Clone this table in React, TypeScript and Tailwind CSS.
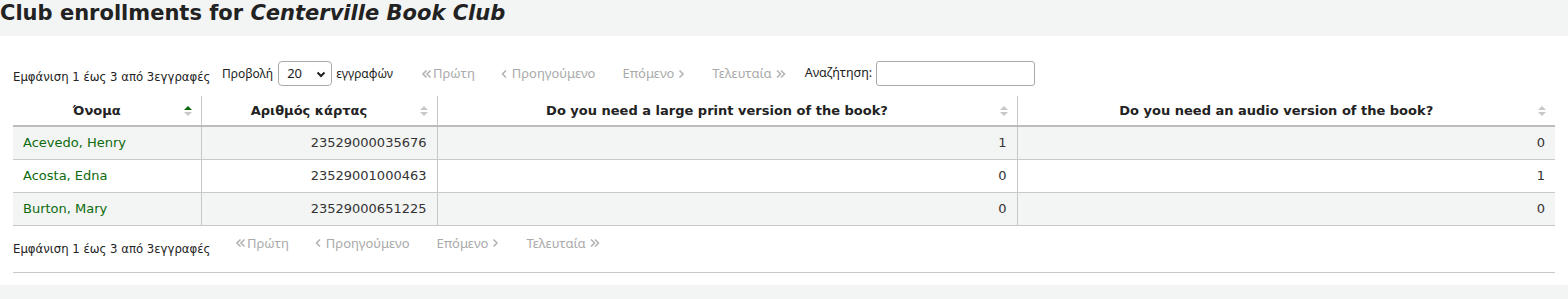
import React from "react";

const rows = [
  { name: "Acevedo, Henry", card: "23529000035676", large: "1", audio: "0" },
  { name: "Acosta, Edna", card: "23529001000463", large: "0", audio: "1" },
  { name: "Burton, Mary", card: "23529000651225", large: "0", audio: "0" },
];

const headers = [
  "Όνομα",
  "Αριθμός κάρτας",
  "Do you need a large print version of the book?",
  "Do you need an audio version of the book?",
];

function SortIcon({ active }: { active?: boolean }) {
  return (
    <svg width="8" height="12" viewBox="0 0 8 12" className="absolute right-[9px] top-[9px]">
      <path d="M0 5 L4 1 L8 5 Z" fill={active ? "#0a6b0a" : "#c8c8c8"} />
      <path d="M0 7 L4 11 L8 7 Z" fill="#c8c8c8" />
    </svg>
  );
}

function Chevron({ double, right }: { double?: boolean; right?: boolean }) {
  const d = double
    ? right
      ? "M1 1.5 L4.5 5 L1 8.5 M5 1.5 L8.5 5 L5 8.5"
      : "M4.5 1.5 L1 5 L4.5 8.5 M8.5 1.5 L5 5 L8.5 8.5"
    : right
      ? "M1.5 1.5 L5 5 L1.5 8.5"
      : "M5 1.5 L1.5 5 L5 8.5";
  return (
    <svg width={double ? 10 : 7} height="10" viewBox={double ? "0 0 10 10" : "0 0 7 10"} className="shrink-0">
      <path d={d} stroke="#b4b4b4" strokeWidth="1.6" fill="none" />
    </svg>
  );
}

function Pager() {
  return (
    <div className="flex items-center font-['Noto_Sans',sans-serif] text-[13px] text-[#aaaaaa]">
      <span className="flex items-center gap-[1px] px-[13px]">
        <Chevron double />
        Πρώτη
      </span>
      <span className="flex items-center gap-[4px] px-[13px]">
        <Chevron />
        Προηγούμενο
      </span>
      <span className="flex items-center gap-[4px] px-[14px]">
        Επόμενο
        <Chevron right />
      </span>
      <span className="flex items-center gap-[4px] px-[13px]">
        Τελευταία
        <Chevron double right />
      </span>
    </div>
  );
}

export default function App() {
  return (
    <div className="w-[1568px] h-[299px] bg-[#f3f4f4] font-['DejaVu_Sans',sans-serif] text-[#222]">
      <h1 className="h-[36px] text-[21px] font-bold leading-[26px]">
        Club enrollments for <em>Centerville Book Club</em>
      </h1>
      <div className="bg-white h-[249px] px-[13px] pt-[25px]">
        <div className="flex items-center h-[25px] w-[1542px]">
          <span className="text-[11.7px] pt-[8px] w-[200px] whitespace-nowrap">Εμφάνιση 1 έως 3 από 3εγγραφές</span>
          <div className="flex items-center font-['Noto_Sans',sans-serif] text-[12px] ml-[9px]">
            <span>Προβολή</span>
            <div className="relative ml-[5px] w-[54px] h-[25px] border border-[#aaa] rounded-[4px] flex items-center pl-[8px] text-[13px]">
              20
              <svg width="10" height="7" viewBox="0 0 10 7" className="absolute right-[5px] top-[9px]">
                <path d="M1.5 1.5 L5 5 L8.5 1.5" stroke="#222" strokeWidth="2" fill="none" />
              </svg>
            </div>
            <span className="ml-[4px]">εγγραφών</span>
          </div>
          <div className="ml-[16px]">
            <Pager />
          </div>
          <div className="flex items-center font-['Noto_Sans',sans-serif] text-[12.5px] ml-[6px]">
            <span>Αναζήτηση:</span>
            <div className="ml-[4px] w-[159px] h-[25px] border border-[#aaa] rounded-[3px]" />
          </div>
        </div>

        <table className="table-fixed border-collapse mt-[10px] w-[1542px] text-[13px]">
          <colgroup>
            <col className="w-[188px]" />
            <col className="w-[236px]" />
            <col className="w-[580px]" />
            <col className="w-[538px]" />
          </colgroup>
          <thead>
            <tr className="h-[30px] border-b-2 border-[#bcbcbc]">
              {headers.map((h, i) => (
                <th
                  key={h}
                  className={"relative font-bold pl-[10px] pr-[30px] text-center " + (i > 0 ? "border-l border-[#c8c8c8]" : "")}
                >
                  {h}
                  <SortIcon active={i === 0} />
                </th>
              ))}
            </tr>
          </thead>
          <tbody>
            {rows.map((r, i) => (
              <tr key={r.name} className={"h-[33px] border-b border-[#c8c8c8] " + (i % 2 === 0 ? "bg-[#f3f4f4]" : "bg-white")}>
                <td className="px-[10px] text-[#0c6b0c]">{r.name}</td>
                <td className="px-[10px] text-right border-l border-[#c8c8c8] text-[#333]">{r.card}</td>
                <td className="px-[10px] text-right border-l border-[#c8c8c8] text-[#333]">{r.large}</td>
                <td className="px-[10px] text-right border-l border-[#c8c8c8] text-[#333]">{r.audio}</td>
              </tr>
            ))}
          </tbody>
        </table>

        <div className="flex items-start h-[47px] border-b border-[#c8c8c8] w-[1542px] pt-[8px]">
          <span className="text-[11.7px] pt-[7px] w-[200px] whitespace-nowrap">Εμφάνιση 1 έως 3 από 3εγγραφές</span>
          <div className="ml-[10px]">
            <Pager />
          </div>
        </div>
      </div>
    </div>
  );
}
